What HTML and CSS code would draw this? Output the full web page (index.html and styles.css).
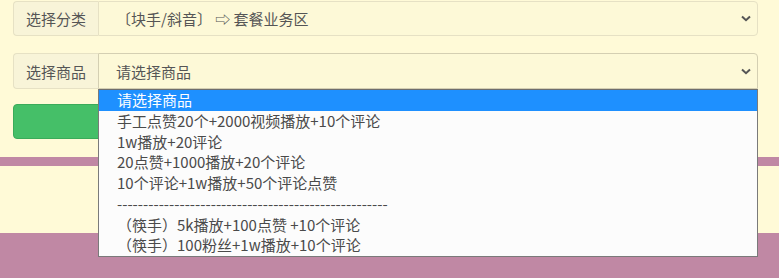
FILE: index.html
```html
<!DOCTYPE html>
<html lang="zh">
<head>
<meta charset="utf-8">
<link rel="stylesheet" href="styles.css">
</head>
<body>
<div class="page">
  <form class="form">
    <div class="group">
      <span class="addon">选择分类</span>
      <div class="select">
        <span class="value">〔块手/斜音〕 ⇨ 套餐业务区</span>
        <svg class="chev" width="10" height="7" viewBox="0 0 10 7"><path d="M1 1.5 L5 5.2 L9 1.5" fill="none" stroke="#555" stroke-width="2"/></svg>
      </div>
    </div>
    <div class="group second">
      <span class="addon">选择商品</span>
      <div class="select focus">
        <span class="value">请选择商品</span>
        <svg class="chev" width="10" height="7" viewBox="0 0 10 7"><path d="M1 1.5 L5 5.2 L9 1.5" fill="none" stroke="#555" stroke-width="2"/></svg>
      </div>
      <ul class="popup">
        <li class="opt active">请选择商品</li>
        <li class="opt">手工点赞20个+2000视频播放+10个评论</li>
        <li class="opt">1w播放+20评论</li>
        <li class="opt">20点赞+1000播放+20个评论</li>
        <li class="opt">10个评论+1w播放+50个评论点赞</li>
        <li class="opt">----------------------------------------------------</li>
        <li class="opt">（筷手）5k播放+100点赞 +10个评论</li>
        <li class="opt">（筷手）100粉丝+1w播放+10个评论</li>
      </ul>
    </div>
    <button type="button" class="btn"></button>
  </form>
  <div class="stripe"></div>
  <div class="band"></div>
  <div class="footer"></div>
</div>
</body>
</html>
```
FILE: styles.css
```css
html, body {
  margin: 0;
  padding: 0;
  background: #c088a4;
  height: 100%;
  overflow: hidden;
}
.page {
  font-family: "Noto Sans CJK SC", "Noto Sans", sans-serif;
  font-size: 15px;
  color: #555;
}
.form {
  background: #fffad7;
  height: 157px;
  padding: 1px 21px 0 13px;
  box-sizing: border-box;
  margin: 0;
}
.group {
  position: relative;
  display: flex;
  height: 35px;
}
.group.second {
  margin-top: 17px;
  height: 36px;
}
.addon {
  width: 85px;
  box-sizing: border-box;
  background: #f8f4d8;
  border: 1px solid #e6e1c4;
  border-right: none;
  border-radius: 4px 0 0 4px;
  display: flex;
  align-items: center;
  justify-content: center;
  color: #555;
}
.select {
  flex: 1;
  box-sizing: border-box;
  background: #fdf9d7;
  border: 1px solid #e6e1c4;
  border-radius: 0 4px 4px 0;
  display: flex;
  align-items: center;
  padding: 0 6px 0 17px;
  color: #555;
}
.select.focus {
  border-color: #d4cfb2;
  border-radius: 0 4px 0 0;
}
.value {
  flex: 1;
  white-space: nowrap;
}
.chev {
  display: block;
}
.popup {
  position: absolute;
  left: 85px;
  right: 0;
  top: 36px;
  margin: 0;
  padding: 0;
  list-style: none;
  background: #fcfcfc;
  border: 1px solid #7a7a7a;
  border-top-color: #6e6e6e;
  z-index: 5;
}
.opt {
  height: 20.75px;
  line-height: 20.75px;
  padding-left: 18px;
  color: #4a4a4a;
  white-space: nowrap;
}
.opt.active {
  background: #1e90ff;
  color: #fff;
}
.btn {
  display: block;
  margin-top: 15px;
  width: 100%;
  height: 35px;
  background: #45bf68;
  border: 1px solid #3aab5a;
  border-radius: 4px;
  padding: 0;
}
.stripe {
  height: 9px;
  background: #c088a4;
}
.band {
  height: 67px;
  background: #fffad7;
}
.footer {
  height: 45px;
  background: #c088a4;
}
```
